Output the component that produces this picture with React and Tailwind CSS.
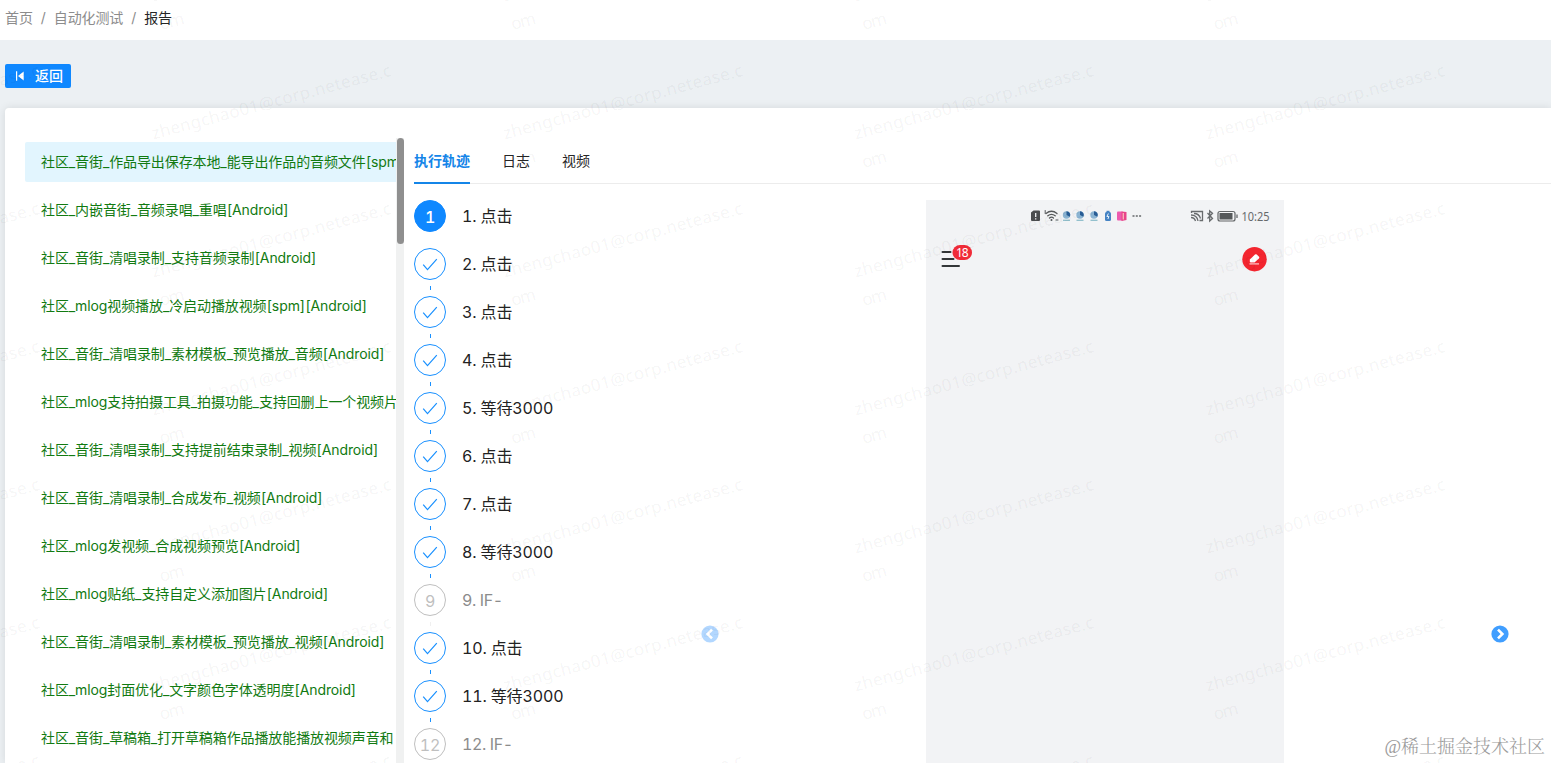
const cases = [
  '社区_音街_作品导出保存本地_能导出作品的音频文件[spm]',
  '社区_内嵌音街_音频录唱_重唱[Android]',
  '社区_音街_清唱录制_支持音频录制[Android]',
  '社区_mlog视频播放_冷启动播放视频[spm][Android]',
  '社区_音街_清唱录制_素材模板_预览播放_音频[Android]',
  '社区_mlog支持拍摄工具_拍摄功能_支持回删上一个视频片',
  '社区_音街_清唱录制_支持提前结束录制_视频[Android]',
  '社区_音街_清唱录制_合成发布_视频[Android]',
  '社区_mlog发视频_合成视频预览[Android]',
  '社区_mlog贴纸_支持自定义添加图片[Android]',
  '社区_音街_清唱录制_素材模板_预览播放_视频[Android]',
  '社区_mlog封面优化_文字颜色字体透明度[Android]',
  '社区_音街_草稿箱_打开草稿箱作品播放能播放视频声音和',
]

const steps = [
  { title: '点击', status: 'active' },
  { title: '点击', status: 'done' },
  { title: '点击', status: 'done' },
  { title: '点击', status: 'done' },
  { title: '等待3000', status: 'done' },
  { title: '点击', status: 'done' },
  { title: '点击', status: 'done' },
  { title: '等待3000', status: 'done' },
  { title: 'IF-', status: 'wait' },
  { title: '点击', status: 'done' },
  { title: '等待3000', status: 'done' },
  { title: 'IF-', status: 'wait' },
]

const circleStyles = {
  active: 'border-[#0f88ff] bg-[#0f88ff] text-white font-medium',
  done: 'border-[#1890ff] text-[#1890ff]',
  wait: 'border-[#bfbfbf] text-[#bfbfbf]',
}

const tailStyles = {
  active: 'bg-transparent',
  done: 'bg-[#1890ff]',
  wait: 'bg-[#f0f0f0]',
}

function Breadcrumb() {
  return (
    <div className="flex h-10 items-start gap-2 bg-white pt-[7px] pl-[5px] text-sm leading-[22px] tracking-[-0.1px] text-[#8c8c8c]">
      <span>首页</span>
      <span>/</span>
      <span>自动化测试</span>
      <span>/</span>
      <span className="text-[#262626]">报告</span>
    </div>
  )
}

function CaseList() {
  return (
    <div className="flex h-[625px] w-[379px] shrink-0">
      <ul className="w-[371px] overflow-hidden pt-1">
        {cases.map((name, i) => (
          <li
            key={i}
            className={`mb-2 h-10 pl-4 text-sm leading-10 tracking-[-0.1px] whitespace-nowrap text-[#117a11] ${i === 0 ? 'rounded-l-[2px] bg-[#e2f5fe]' : ''}`}
          >
            {name}
          </li>
        ))}
      </ul>
      <div className="w-2 bg-[#f0f1f1]">
        <div className="ml-px h-[106px] w-[7px] rounded-full bg-[#8f8f8f]" />
      </div>
    </div>
  )
}

function Tabs() {
  return (
    <div className="flex h-[46px] gap-8 border-b border-[#ececec] text-sm leading-[46px] text-[#262626]">
      <span className="h-[46px] border-b-2 border-[#1485e8] font-bold text-[#1485e8]">执行轨迹</span>
      <span>日志</span>
      <span>视频</span>
    </div>
  )
}

function Steps() {
  return (
    <div className="w-[270px] shrink-0 text-base tracking-[-0.15px]">
      {steps.map((step, i) => (
        <div key={i} className="flex h-12">
          <div className="flex w-8 flex-col items-center">
            <div className={`flex size-8 shrink-0 items-center justify-center rounded-full border ${circleStyles[step.status]}`}>
              {step.status === 'done' ? (
                <svg viewBox="0 0 16 16" className="size-4" fill="none" stroke="currentColor" strokeWidth="1.2">
                  <path d="M1.2 8.6 5.5 13.6 14.8 3.2" />
                </svg>
              ) : (
                <span className="pt-px leading-[30px]">{i + 1}</span>
              )}
            </div>
            <div className={`mt-1.5 ml-px h-1 w-px ${tailStyles[step.status]}`} />
          </div>
          <span className={`ml-4 leading-8 whitespace-nowrap ${step.status === 'wait' ? 'tracking-[-0.4px] text-[#8c8c8c]' : 'text-[#222]'}`}>
            {i + 1}. {step.title}
          </span>
        </div>
      ))}
    </div>
  )
}

function StatusBar() {
  return (
    <svg width="358" height="80" viewBox="0 0 358 80" className="block">
      {/* sim alert */}
      <path d="M105 12.5 107.500 10.500H113a1 1 0 0 1 1 1V20a1 1 0 0 1-1 1h-7a1 1 0 0 1-1-1z" fill="#4b4d4f" />
      <path d="M109.700 13v4M109.700 18.200v1.300" stroke="#f2f3f5" strokeWidth="1.300" />
      {/* wifi */}
      <g fill="none" stroke="#55585a" strokeWidth="1.300" strokeLinecap="round">
        <path d="M120 13.500q5.500-4.500 11 0M121.800 15.800q3.700-3 7.400 0M123.500 18q2-1.600 4 0" />
        <path d="M119.200 10.500v3M130 20h2" strokeWidth="1" />
      </g>
      <circle cx="125.500" cy="20" r="1" fill="#55585a" />
      {[140.500, 154, 168].map((x) => (
        <g key={x}>
          <circle cx={x} cy="15" r="3.700" fill="#8bb4d3" />
          <path d={`M${x} 11.300a3.700 3.700 0 0 1 3.300 5.500L${x} 15z`} fill="#285c94" />
          <path d={`M${x - 3.500} 20.300h7`} stroke="#8ebdcb" strokeWidth="1.300" />
        </g>
      ))}
      <rect x="179" y="12" width="6" height="9" rx="1.500" fill="#4583c4" />
      <rect x="180.500" y="10.800" width="3" height="2" fill="#4583c4" />
      <path d="m182.400 13.500-1.500 3h2l-1 2.500" fill="none" stroke="#e7f2fb" />
      <rect x="191" y="11.500" width="6" height="9" rx="1" fill="#ed5aae" />
      <path d="m195.500 11.500 5 .5v8l-5 1z" fill="#e84489" />
      <path d="M197.300 13v6.500" stroke="#f9b7bc" strokeWidth="1.300" />
      <path d="M206.500 16h9" stroke="#66696b" strokeWidth="1.500" strokeDasharray="2 1.300" />
      {/* cast */}
      <g fill="none" stroke="#686b6d" strokeWidth="1.300">
        <path d="M265.500 13v-1.500h11v9h-3M265 15q6 0 7 6M265 17.500q3.500 0 4.500 3.500M268 13.500q5 0 6.500 5" />
        <path d="m281.500 13 5 5.500-2.800 2.500v-10l2.800 2.300-5 5.200" />
      </g>
      <rect x="292" y="11.500" width="17" height="9.500" rx="2" fill="none" stroke="#626567" strokeWidth="1.200" />
      <rect x="293.500" y="13" width="13" height="6.500" fill="#55585a" />
      <path d="M311 14.500v3.500" stroke="#626567" strokeWidth="1.300" />
      <text x="315.500" y="21" fontSize="12.500" textLength="28" lengthAdjust="spacingAndGlyphs" fill="#66696b" className="font-['Noto_Sans',sans-serif]">10:25</text>
      {/* menu */}
      <path d="M16.500 52h8M16.500 59h11M16.500 66h16.500" stroke="#333638" strokeWidth="2" strokeLinecap="round" />
      <rect x="26.500" y="45" width="19.500" height="15" rx="7.500" fill="#f02b38" />
      <text x="36.300" y="56.800" fontSize="12" textAnchor="middle" fill="#fff" textLength="12.500" className="font-['Noto_Sans',sans-serif]">18</text>
      {/* publish */}
      <circle cx="328.500" cy="59.200" r="12.200" fill="#f3252f" />
      <path d="m323.800 59.500 5.200-5q1-.7 1.800.1l2.200 2.200q.7.900-.1 1.700l-4.400 3.900h-3.900q-.9 0-.8-1z" fill="#fff" />
      <path d="M323.500 63.900h9.500" stroke="#fcc" strokeWidth="1.200" />
    </svg>
  )
}

function Arrow({ left }) {
  return (
    <svg viewBox="0 0 18 18" className={`size-[18px] ${left ? '-scale-x-100 opacity-40' : ''}`}>
      <circle cx="9" cy="9" r="8.600" fill="#409eff" />
      <path d="m7 4.600 4.400 4.400-4.400 4.400" fill="none" stroke="#fff" strokeWidth="2.600" />
    </svg>
  )
}

function Preview() {
  return (
    <div className="flex w-[842px] justify-center">
      <div className="flex w-[808px] items-start justify-between">
        <div className="pt-[425px]">
          <Arrow left />
        </div>
        <div className="h-[600px] w-[358px] bg-[#f2f3f5]">
          <StatusBar />
        </div>
        <div className="pt-[425px]">
          <Arrow />
        </div>
      </div>
    </div>
  )
}

function Watermark() {
  const cols = [-198, 153.500, 505, 856, 1207.500]
  const rows = [1.500, 139.500, 277.500, 415.500, 553.500, 691.500, 829.500]
  return (
    <svg className="pointer-events-none absolute inset-0 h-full w-full font-['Noto_Sans',sans-serif]" fill="#000" fillOpacity="0.055" fontSize="17">
      {rows.map((y) =>
        cols.map((x) => (
          <g key={`${x}-${y}`} transform={`translate(${x} ${y}) rotate(-15)`}>
            <text textLength="247">zhengchao01@corp.netease.c</text>
            <text x="0" y="29.500" textLength="25">om</text>
          </g>
        ))
      )}
    </svg>
  )
}

export default function App() {
  return (
    <div className="relative h-[763px] overflow-hidden bg-[#ecf0f3] font-[Inter,'Noto_Sans_CJK_SC',sans-serif] tabular-nums">
      <Breadcrumb />
      <div className="pt-6 pl-[5px]">
        <button className="flex h-6 w-[66px] items-center gap-2 rounded-[2px] bg-[#0f88ff] pl-2.5 text-sm font-medium text-white">
          <svg viewBox="0 0 12 12" className="size-3" fill="currentColor">
            <path d="M1 1.300h1.200v9.400H1zM8.700 1.500v9L3 6z" />
          </svg>
          返回
        </button>
        <div className="mt-5 flex h-[655px] rounded-tl bg-white pt-[30px] pl-5 shadow-[0_0_8px_rgba(0,0,0,0.1)]">
          <CaseList />
          <div className="ml-2.5 flex-1">
            <Tabs />
            <div className="flex pt-4">
              <Steps />
              <Preview />
            </div>
          </div>
        </div>
      </div>
      <Watermark />
      <div className="absolute right-1.5 bottom-1 font-['Liberation_Serif','Noto_Serif_CJK_SC','Noto_Sans_CJK_SC',serif] text-[18px] leading-6 font-light text-[#9b9b9b]">
        @稀土掘金技术社区
      </div>
    </div>
  )
}
